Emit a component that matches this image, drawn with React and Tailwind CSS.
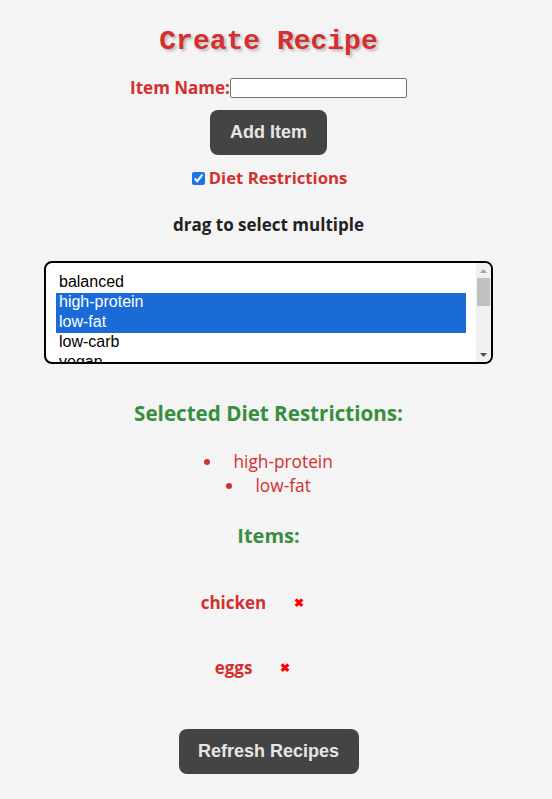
import React from "react";

const options = ["balanced", "high-protein", "low-fat", "low-carb", "vegan"];
const selected = ["high-protein", "low-fat"];

export default function App() {
  return (
    <div className="min-h-[799px] bg-[#f4f4f4] pr-[15px] flex flex-col items-center text-center" style={{ fontFamily: '"Open Sans", sans-serif' }}>
      <h1
        className="mt-[26px] h-[32px] leading-[32px] text-[28px] font-bold text-[#d32f2f] [text-shadow:2px_2px_3px_rgba(0,0,0,0.25)]"
        style={{ fontFamily: '"Liberation Mono", monospace' }}
      >
        Create Recipe
      </h1>

      <div className="mt-[19px] h-[22px] flex items-center">
        <label className="text-[17px] font-bold text-[#d32f2f] leading-[22px]">Item Name:</label>
        <input type="text" className="w-[177px] h-[20px] bg-white border border-[#767676] rounded-[2px] outline-none" />
      </div>

      <button
        className="mt-[11px] w-[117px] h-[45px] rounded-[8px] bg-[#444444] text-[#e6e6e6] text-[18px] font-bold"
        style={{ fontFamily: '"Liberation Sans", Arial, sans-serif' }}
      >
        Add Item
      </button>

      <div className="mt-[12px] h-[22px] flex items-center pl-[2px]">
        <input type="checkbox" defaultChecked className="w-[13px] h-[13px] m-0 mr-[4px] accent-[#1a73e8]" />
        <span className="text-[16.7px] font-bold text-[#d32f2f] leading-[22px]">Diet Restrictions</span>
      </div>

      <p className="mt-[25px] h-[22px] leading-[22px] text-[17px] font-bold text-[#222222]">drag to select multiple</p>

      <div
        className="mt-[25px] w-[449px] h-[103px] border-2 border-black rounded-[8px] bg-white overflow-hidden flex text-left"
        style={{ fontFamily: '"Liberation Sans", Arial, sans-serif' }}
      >
        <div className="flex-1 overflow-hidden pt-[10px] px-[10px]">
          {options.map((o) => (
            <div
              key={o}
              className={
                "h-[20px] leading-[18px] text-[16px] pl-[3px] " +
                (selected.includes(o) ? "bg-[#1a6bd6] text-white" : "text-black")
              }
            >
              {o}
            </div>
          ))}
        </div>
        <div className="w-[15px] h-full bg-[#f1f1f1] flex flex-col items-center">
          <div className="h-[15px] w-full flex items-center justify-center">
            <svg width="7" height="4" viewBox="0 0 7 4"><polygon points="0,4 3.5,0 7,4" fill="#a3a3a3" /></svg>
          </div>
          <div className="w-[13px] h-[28px] bg-[#c1c1c1]" />
          <div className="flex-1" />
          <div className="h-[15px] w-full flex items-center justify-center">
            <svg width="7" height="4" viewBox="0 0 7 4"><polygon points="0,0 3.5,4 7,0" fill="#505050" /></svg>
          </div>
        </div>
      </div>

      <h2 className="mt-[35px] h-[28px] leading-[28px] text-[20.6px] font-bold text-[#388e3c]">Selected Diet Restrictions:</h2>

      <ul className="mt-[23px] list-disc list-inside text-[17.3px] text-[#d32f2f]">
        {selected.map((s) => (
          <li key={s} className="h-[24px] leading-[24px]">
            <span className="ml-[5px]">{s}</span>
          </li>
        ))}
      </ul>

      <h2 className="mt-[24px] h-[28px] leading-[28px] text-[20px] font-bold text-[#388e3c]">Items:</h2>

      {["chicken", "eggs"].map((it) => (
        <div key={it} className="mt-[41px] h-[24px] flex items-center">
          <span className="text-[17px] font-bold text-[#d32f2f] leading-[24px]">{it}</span>
          <span className="ml-[28px] mr-[32px] text-[12px] font-bold text-[#ff0000] leading-[24px]">✖</span>
        </div>
      ))}

      <button
        className="mt-[49px] w-[180px] h-[45px] rounded-[8px] bg-[#444444] text-[#e6e6e6] text-[18px] font-bold"
        style={{ fontFamily: '"Liberation Sans", Arial, sans-serif' }}
      >
        Refresh Recipes
      </button>
    </div>
  );
}
